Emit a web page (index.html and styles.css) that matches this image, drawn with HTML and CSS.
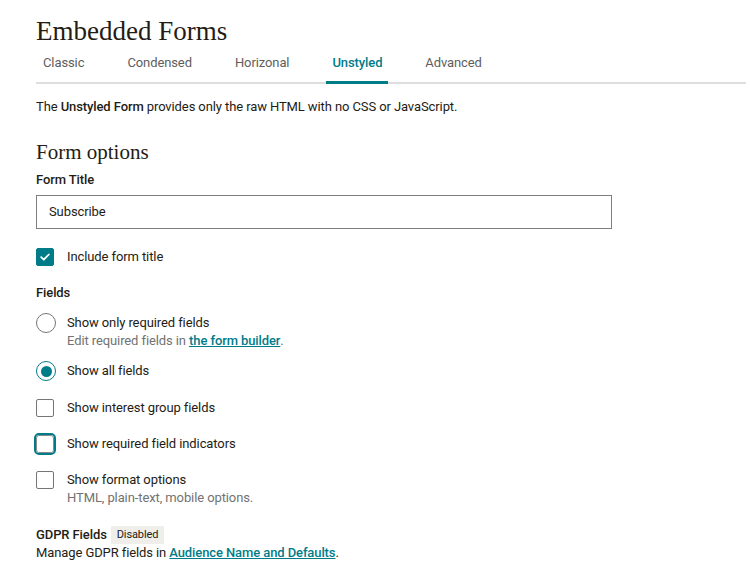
FILE: index.html
```html
<!DOCTYPE html>
<html>
<head>
<meta charset="utf-8">
<link rel="stylesheet" href="styles.css">
</head>
<body>
<div class="page">
  <h1 class="title">Embedded Forms</h1>
  <nav class="tabs">
    <span class="tab">Classic</span>
    <span class="tab">Condensed</span>
    <span class="tab">Horizonal</span>
    <span class="tab active">Unstyled</span>
    <span class="tab">Advanced</span>
  </nav>
  <p class="desc">The <strong>Unstyled Form</strong> provides only the raw HTML with no CSS or JavaScript.</p>
  <h2 class="section">Form options</h2>
  <div class="label">Form Title</div>
  <div class="input">Subscribe</div>
  <div class="opt opt-first">
    <span class="box checked"><svg viewBox="0 0 18 18" width="18" height="18"><path d="M5.2 9.2l2.6 2.5 5-5.2" fill="none" stroke="#fff" stroke-width="1.8" stroke-linecap="round" stroke-linejoin="round"/></svg></span>
    <span class="otext">Include form title</span>
  </div>
  <div class="label fields">Fields</div>
  <div class="opt">
    <span class="radio"></span>
    <div>
      <div class="otext">Show only required fields</div>
      <div class="sub">Edit required fields in <a class="link">the form builder</a>.</div>
    </div>
  </div>
  <div class="opt">
    <span class="radio on"><span class="dot"></span></span>
    <span class="otext">Show all fields</span>
  </div>
  <div class="opt gap18">
    <span class="box"></span>
    <span class="otext">Show interest group fields</span>
  </div>
  <div class="opt gap18">
    <span class="box focus"></span>
    <span class="otext">Show required field indicators</span>
  </div>
  <div class="opt gap18">
    <span class="box"></span>
    <div>
      <div class="otext">Show format options</div>
      <div class="sub">HTML, plain-text, mobile options.</div>
    </div>
  </div>
  <div class="gdpr">
    <strong>GDPR Fields</strong><span class="badge">Disabled</span>
  </div>
  <div class="manage">Manage GDPR fields in <a class="link">Audience Name and Defaults</a>.</div>
</div>
</body>
</html>
```
FILE: styles.css
```css
body {
  margin: 0;
  background: #fff;
  color: #241c15;
  font-family: Roboto, "Liberation Sans", sans-serif;
  font-size: 13px;
  line-height: 18px;
  letter-spacing: -0.1px;
}
.page {
  width: 710px;
  margin-left: 36px;
}
.title {
  margin: 0;
  padding-top: 15px;
  font-family: "Liberation Serif", serif;
  font-weight: normal;
  font-size: 27px;
  line-height: 32px;
  letter-spacing: 0;
  color: #241c15;
}
.tabs {
  display: flex;
  gap: 31px;
  border-bottom: 2px solid #dedede;
}
.tab {
  padding: 7px 6px 9px;
  border-bottom: 3px solid transparent;
  margin-bottom: -2px;
  color: #5e5e5e;
  font-size: 13px;
  line-height: 18px;
}
.tab:first-child { padding-left: 7px; }
.tab.active {
  color: #007c89;
  font-weight: 500;
  border-bottom-color: #007c89;
}
.desc {
  margin: 14px 0 0;
}
.desc strong { font-weight: 500; }
.section {
  margin: 23px 0 0;
  font-family: "Liberation Serif", serif;
  font-weight: normal;
  font-size: 21px;
  line-height: 26px;
  letter-spacing: 0;
}
.label {
  margin-top: 6px;
  font-weight: 500;
}
.input {
  margin-top: 6px;
  width: 550px;
  height: 32px;
  border: 1px solid #7d7d7d;
  padding: 0 12px;
  line-height: 32px;
  box-sizing: content-box;
}
.opt {
  display: grid;
  grid-template-columns: 31px auto;
  align-items: start;
  margin-top: 12px;
}
.opt-first { margin-top: 19px; }
.gap18 { margin-top: 18px; }
.fields { margin-top: 18px; }
.box {
  width: 18px;
  height: 18px;
  box-sizing: border-box;
  border: 1px solid #767676;
  border-radius: 2px;
  display: block;
}
.box.checked {
  background: #007c89;
  border-color: #007c89;
}
.box svg { display: block; margin: -1px; }
.box.focus {
  border-color: #8a8a8a;
  outline: 2px solid #007c89;
  outline-offset: 0;
  border-radius: 3px;
}
.radio {
  width: 20px;
  height: 20px;
  box-sizing: border-box;
  border: 1px solid #767676;
  border-radius: 50%;
  display: flex;
  align-items: center;
  justify-content: center;
  margin-top: -1px;
}
.radio.on {
  border: 1.5px solid #007c89;
}
.dot {
  width: 11px;
  height: 11px;
  border-radius: 50%;
  background: #007c89;
}
.sub {
  color: #727272;
}
.link {
  color: #007c89;
  font-weight: 500;
  text-decoration: underline;
}
.gdpr {
  margin-top: 19px;
  display: flex;
  align-items: center;
  gap: 4px;
}
.gdpr strong { font-weight: 500; }
.badge {
  background: #efeeea;
  font-size: 11px;
  line-height: 18px;
  padding: 0 6px;
  color: #241c15;
}
```
